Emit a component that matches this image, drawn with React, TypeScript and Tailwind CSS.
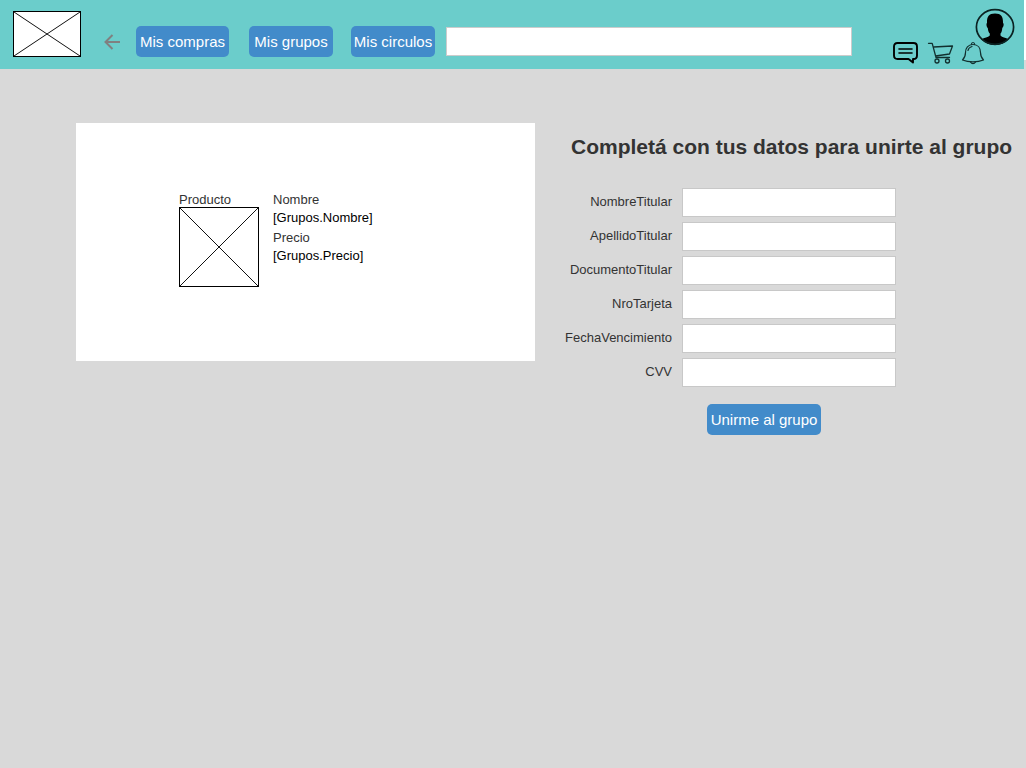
import React, { useId } from "react";

const fields = [
  "NombreTitular",
  "ApellidoTitular",
  "DocumentoTitular",
  "NroTarjeta",
  "FechaVencimiento",
  "CVV",
];

function Placeholder({ className, width, height }: { className: string; width: number; height: number }) {
  return (
    <svg className={className} viewBox={`0 0 ${width} ${height}`} preserveAspectRatio="none" role="img" aria-label="Imagen">
      <rect x="0.5" y="0.5" width={width - 1} height={height - 1} fill="#fff" stroke="#000" />
      <path d={`M1 1 L${width - 1} ${height - 1} M${width - 1} 1 L1 ${height - 1}`} stroke="#111" fill="none" />
    </svg>
  );
}

function NavButton({ children, className }: { children: React.ReactNode; className: string }) {
  return (
    <button type="button" className={`h-[31px] shrink-0 rounded-[5px] bg-[#428bca] pt-0.5 text-[15px] whitespace-nowrap text-white ${className}`}>
      {children}
    </button>
  );
}

function ChatIcon() {
  return (
    <svg className="h-6 w-7" viewBox="0 0 28 24" fill="none" stroke="#000" strokeWidth="1.9" strokeLinejoin="round" strokeLinecap="round">
      <path d="M5.5 2H21.500Q25 2 25 5.500V14.500Q25 18 21.500 18H21V21.500L16.500 18H5.500Q2 18 2 14.500V5.500Q2 2 5.500 2Z" />
      <path d="M7 8H20M7 12H20" strokeWidth="1.6" />
    </svg>
  );
}

function CartIcon() {
  return (
    <svg className="h-6 w-7" viewBox="0 0 28 24" fill="none" stroke="#12302f" strokeWidth="1.3" strokeLinejoin="round" strokeLinecap="round">
      <path d="M1.500 2.300H5.200L9 16.500H22.500M6.500 6L25.500 5L22.500 13L8.500 15" />
      <circle cx="10" cy="20" r="2" />
      <circle cx="20.500" cy="20" r="2" />
    </svg>
  );
}

function BellIcon() {
  return (
    <svg className="h-6 w-6" viewBox="0 0 24 24" fill="none" stroke="#12302f" strokeWidth="1.2" strokeLinejoin="round" strokeLinecap="round">
      <path d="M12 3.500C7 3.500 4.500 7 4.500 11.500C4.500 15 4 16.500 1.500 19Q6 20.800 12 20.800T22.500 19C20 16.500 19.500 15 19.500 11.500C19.500 7 17 3.500 12 3.500Z" />
      <path d="M10.300 3.500Q10.500 1.500 12 1.500T13.700 3.500M9.500 21Q10.500 22.700 12 22.700T14.500 21M7 9.500Q7.500 6.500 11 5.500" />
    </svg>
  );
}

function Avatar() {
  const clip = useId();
  return (
    <svg className="h-[38px] w-10" viewBox="0 0 40 38">
      <clipPath id={clip}>
        <ellipse cx="20" cy="19" rx="19" ry="18" />
      </clipPath>
      <path
        clipPath={`url(#${clip})`}
        d="M20 5.500C13.500 5.500 11.800 9 12 15C11 15.500 11.500 19 12.800 20C13 23 13.800 24.500 14.800 25.500V27.500C13 29.500 9.500 29.500 6 31.500L5 38H35L34 31.500C30.500 29.500 27 29.500 25.500 27.500V25.500C26.500 24.500 27 23 27.300 20C28.600 19 29.200 15.500 28 15C28.200 9 26.500 5.500 20 5.500Z"
        fill="#000"
      />
      <ellipse cx="20" cy="19" rx="18.600" ry="17.300" fill="none" stroke="#0b2222" strokeWidth="1.700" />
    </svg>
  );
}

export default function App() {
  return (
    <div className="min-h-screen bg-[#d9d9d9] font-['Liberation_Sans',Arial,sans-serif] text-[13px] text-[#333]">
      <div className="flex items-start">
        <header className="flex h-[69px] flex-1 items-start bg-[#6bcdcb] pl-[13px]">
          <a href="#" aria-label="Inicio" className="mt-[11px] shrink-0">
            <Placeholder className="h-[46px] w-[68px]" width={68} height={46} />
          </a>
          <button type="button" aria-label="Volver" className="mt-[33px] ml-[22px] shrink-0">
            <svg className="h-[18px] w-[18px]" viewBox="0 0 18 18" fill="none" stroke="#808080" strokeWidth="2">
              <path d="M17 9H3M9.500 2L2.500 9L9.500 16" />
            </svg>
          </button>
          <nav className="mt-[26px] ml-[15px] flex shrink-0">
            <NavButton className="w-[93px]">Mis compras</NavButton>
            <NavButton className="ml-5 w-[84px]">Mis grupos</NavButton>
            <NavButton className="ml-[18px] w-[84px]">Mis circulos</NavButton>
          </nav>
          <input type="search" aria-label="Buscar" className="mt-[27px] ml-[11px] h-[29px] min-w-0 flex-1 border border-[#ccc] bg-white px-2 outline-none" />
          <div className="mt-[41px] ml-10 flex shrink-0 items-start">
            <button type="button" aria-label="Mensajes"><ChatIcon /></button>
            <button type="button" aria-label="Carrito" className="ml-[7px]"><CartIcon /></button>
            <button type="button" aria-label="Notificaciones" className="ml-[6px]"><BellIcon /></button>
          </div>
          <button type="button" aria-label="Perfil" className="mt-2 mr-[9px] -ml-[10px] shrink-0"><Avatar /></button>
        </header>
        <div className="h-[60px] w-[2px] bg-white" />
      </div>
      <main className="flex items-start pt-[54px] pl-[76px]">
        <section className="flex h-[238px] w-[459px] shrink-0 items-start bg-white pt-[68px] pl-[103px]">
          <div>
            <div className="h-4 leading-[18px]">Producto</div>
            <Placeholder className="h-20 w-20" width={80} height={80} />
          </div>
          <dl className="ml-[14px] leading-[18px]">
            <dt className="h-[18px]">Nombre</dt>
            <dd className="h-5 text-black">[Grupos.Nombre]</dd>
            <dt className="h-[18px]">Precio</dt>
            <dd className="text-black">[Grupos.Precio]</dd>
          </dl>
        </section>
        <section className="ml-7 min-w-0 flex-1">
          <h1 className="pt-2 pl-2 text-[21px] leading-8 font-bold whitespace-nowrap">Completá con tus datos para unirte al grupo</h1>
          <form className="mt-[25px]" onSubmit={(e) => e.preventDefault()}>
            <div className="flex flex-col gap-[5px]">
              {fields.map((name) => (
                <div key={name} className="flex">
                  <label htmlFor={name} className="w-[109px] text-right leading-7">{name}</label>
                  <input id={name} name={name} className="ml-[10px] h-[29px] w-[214px] border border-[#c8c8c8] bg-white px-2 outline-none" />
                </div>
              ))}
            </div>
            <button type="submit" className="mt-[17px] ml-36 h-[31px] w-[114px] rounded-[5px] bg-[#428bca] pt-0.5 text-[15px] whitespace-nowrap text-white">
              Unirme al grupo
            </button>
          </form>
        </section>
      </main>
    </div>
  );
}
